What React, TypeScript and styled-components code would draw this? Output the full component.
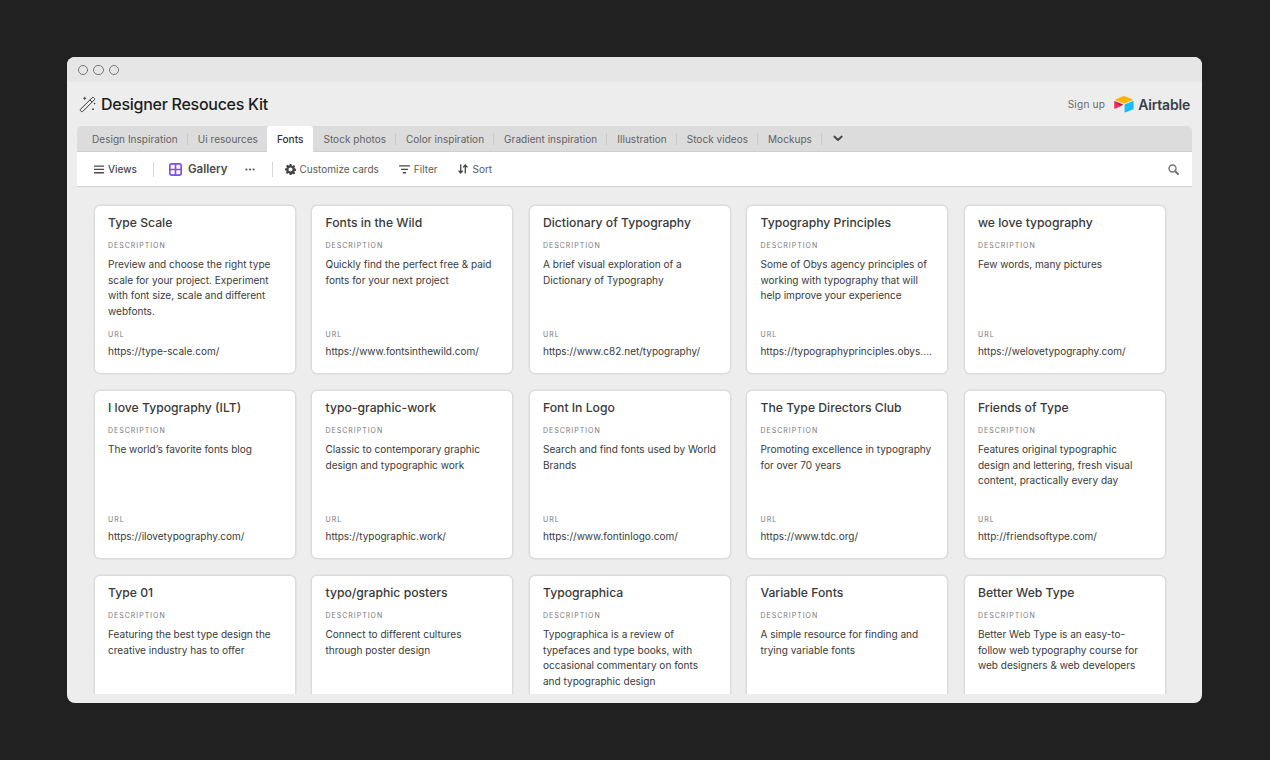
import React from "react";
import styled, { createGlobalStyle } from "styled-components";

const Global = createGlobalStyle`
  html, body { margin: 0; padding: 0; background: #212121; height: 760px; overflow: hidden; }
  body { font-family: Inter, "Liberation Sans", sans-serif; -webkit-font-smoothing: antialiased; }
  * { box-sizing: border-box; }
`;

const Page = styled.div`
  height: 760px;
  padding: 57px 68px 57px 67px;
`;
const Window = styled.div`
  height: 646px;
  background: #ededed;
  border-radius: 8px;
  overflow: hidden;
  display: flex;
  flex-direction: column;
`;
const TitleBar = styled.div`
  height: 25px;
  flex: none;
  background: #e6e6e6;
  display: flex;
  align-items: center;
  gap: 5px;
  padding: 1px 0 0 10.5px;
`;
const Light = styled.span`
  width: 10.5px;
  height: 10.5px;
  border-radius: 50%;
  border: 1px solid #777;
`;
const Shell = styled.div`
  flex: 1;
  min-height: 0;
  padding: 0 10px 9px;
  display: flex;
  flex-direction: column;
`;
const Header = styled.header`
  height: 44px;
  flex: none;
  display: flex;
  align-items: center;
  padding: 0 2px;
`;
const Title = styled.h1`
  margin: 0 0 0 4px;
  font-size: 16px;
  font-weight: 500;
  letter-spacing: -0.27px;
  color: #1d1d1d;
`;
const HeaderRight = styled.div`
  margin-left: auto;
  display: flex;
  align-items: center;
`;
const SignUp = styled.span`
  font-size: 10.1px;
  color: #6a6a6a;
  letter-spacing: 0.2px;
  margin-right: 9px;
`;
const LogoBox = styled.span`
  display: flex;
  margin-left: -1px;
`;
const Wordmark = styled.span`
  font-size: 14px;
  font-weight: 600;
  letter-spacing: -0.2px;
  color: #3a3f47;
  margin-left: 3px;
`;
const Tabs = styled.nav`
  height: 26px;
  flex: none;
  background: #dcdcdc;
  border-bottom: 1px solid #cfcfcf;
  border-radius: 5px 5px 0 0;
  padding-left: 5px;
  display: flex;
`;
const Tab = styled.div<{ $active?: boolean; $hideSep?: boolean }>`
  position: relative;
  height: ${(p) => (p.$active ? "26px" : "25px")};
  padding: 0 10px;
  margin-left: ${(p) => (p.$active ? "-1px" : "0")};
  display: flex;
  align-items: center;
  font-size: 10px;
  letter-spacing: 0.04px;
  color: ${(p) => (p.$active ? "#333" : "#626262")};
  background: ${(p) => (p.$active ? "#fff" : "transparent")};
  border-radius: ${(p) => (p.$active ? "3px 3px 0 0" : "0")};
  font-weight: ${(p) => (p.$active ? 500 : 400)};
  &::after {
    content: "";
    display: ${(p) => (p.$hideSep || p.$active ? "none" : "block")};
    position: absolute;
    right: 0;
    top: 7px;
    height: 12px;
    width: 1px;
    background: #cacaca;
  }
`;
const ChevronWrap = styled.div`
  display: flex;
  align-items: center;
  padding-left: 11px;
  color: #444;
`;
const Toolbar = styled.div`
  height: 35px;
  flex: none;
  background: #fff;
  border-bottom: 1px solid #d2d2d2;
  display: flex;
  align-items: center;
  padding: 0 13px 0 17px;
  color: #444;
`;
const ToolItem = styled.div<{ $gap?: number; $ml?: number; $strong?: boolean }>`
  display: flex;
  align-items: center;
  gap: ${(p) => p.$gap ?? 4}px;
  margin-left: ${(p) => p.$ml ?? 0}px;
  font-size: 10px;
  font-weight: ${(p) => (p.$strong ? 500 : 400)};
  color: ${(p) => (p.$strong ? "#4a4a4a" : "#5a5a5a")};
`;
const GalleryLabel = styled.span`
  font-size: 11.5px;
  font-weight: 600;
  color: #4a4a4a;
`;
const ToolSep = styled.span<{ $ml: number }>`
  width: 1px;
  height: 15px;
  background: #d8d8d8;
  margin-left: ${(p) => p.$ml}px;
`;
const SearchWrap = styled.div`
  margin-left: auto;
  display: flex;
  color: #777;
`;
const Scroll = styled.main`
  flex: 1;
  min-height: 0;
  overflow: hidden;
  padding: 18px 26px 0 17px;
`;
const Grid = styled.div`
  display: grid;
  grid-template-columns: repeat(5, 201.6px);
  grid-auto-rows: 169px;
  column-gap: 15.9px;
  row-gap: 16px;
`;
const Card = styled.article`
  background: #fff;
  border-radius: 5px;
  box-shadow: 0 0 0 1.5px #dcdcdc;
  margin: 1px;
  padding: 8px 13px 0;
  display: flex;
  flex-direction: column;
  min-width: 0;
  height: 167px;
`;
const CardTitle = styled.h2`
  margin: 0;
  height: 18px;
  line-height: 18px;
  font-size: 12.2px;
  font-weight: 500;
  color: #3a3a3a;
  white-space: nowrap;
`;
const Label = styled.div`
  margin-top: 9px;
  height: 9px;
  line-height: 9px;
  font-size: 7px;
  letter-spacing: 1px;
  color: #777;
  text-transform: uppercase;
`;
const Description = styled.p`
  margin: 7px 0 0;
  height: 62px;
  font-size: 10.05px;
  line-height: 15.5px;
  color: #3a3a3a;
`;
const UrlLabel = styled(Label)`
  margin-top: 11px;
`;
const Url = styled.div`
  margin-top: 5px;
  line-height: 15px;
  font-size: 10px;
  color: #3a3a3a;
  white-space: nowrap;
  overflow: hidden;
  text-overflow: ellipsis;
`;

const tabs = ["Design Inspiration", "Ui resources", "Fonts", "Stock photos", "Color inspiration", "Gradient inspiration", "Illustration", "Stock videos", "Mockups"];

const cards = [
  ["Type Scale", "Preview and choose the right type scale for your project. Experiment with font size, scale and different webfonts.", "https://type-scale.com/"],
  ["Fonts in the Wild", "Quickly find the perfect free & paid fonts for your next project", "https://www.fontsinthewild.com/"],
  ["Dictionary of Typography", "A brief visual exploration of a Dictionary of Typography", "https://www.c82.net/typography/"],
  ["Typography Principles", "Some of Obys agency principles of working with typography that will help improve your experience", "https://typographyprinciples.obys.agency/"],
  ["we love typography", "Few words, many pictures", "https://welovetypography.com/"],
  ["I love Typography (ILT)", "The world’s favorite fonts blog", "https://ilovetypography.com/"],
  ["typo-graphic-work", "Classic to contemporary graphic design and typographic work", "https://typographic.work/"],
  ["Font In Logo", "Search and find fonts used by World Brands", "https://www.fontinlogo.com/"],
  ["The Type Directors Club", "Promoting excellence in typography for over 70 years", "https://www.tdc.org/"],
  ["Friends of Type", "Features original typographic design and lettering, fresh visual content, practically every day", "http://friendsoftype.com/"],
  ["Type 01", "Featuring the best type design the creative industry has to offer", "https://type-01.com/"],
  ["typo/graphic posters", "Connect to different cultures through poster design", "https://www.typographicposters.com/"],
  ["Typographica", "Typographica is a review of typefaces and type books, with occasional commentary on fonts and typographic design", "https://typographica.org/"],
  ["Variable Fonts", "A simple resource for finding and trying variable fonts", "https://v-fonts.com/"],
  ["Better Web Type", "Better Web Type is an easy-to-follow web typography course for web designers & web developers", "https://betterwebtype.com/"],
];

const WandIcon = () => (
  <svg width="18" height="18" viewBox="0 0 18 18" fill="none" stroke="#3a3a3a">
    <path d="M1.5 14.3 13.2 2.6a1 1 0 0 1 1.4 0l.8.8a1 1 0 0 1 0 1.4L3.7 16.5a1 1 0 0 1-1.4 0l-.8-.8a1 1 0 0 1 0-1.4Z" strokeWidth="1" />
    <path d="m10.9 4.9 2.2 2.2" strokeWidth="1" />
    <path d="M5.7 1.8v3M4.2 3.3h3" strokeWidth=".9" />
    <circle cx="15.6" cy="8.6" r=".8" fill="#3a3a3a" stroke="none" />
    <circle cx="14" cy="14.2" r=".9" fill="#3a3a3a" stroke="none" />
  </svg>
);

const AirtableLogo = () => (
  <svg width="22" height="18.7" viewBox="0 0 200 170">
    <path fill="#FCB400" d="M90.04 12.37 24.08 39.66c-3.67 1.52-3.63 6.73.06 8.19l66.24 26.27c5.82 2.31 12.3 2.31 18.12 0l66.23-26.27c3.69-1.46 3.73-6.67.06-8.19l-65.96-27.29c-6.02-2.49-12.78-2.49-18.79 0" />
    <path fill="#18BFFF" d="M105.31 88.46v65.62c0 3.12 3.15 5.26 6.05 4.11l73.81-28.65c1.68-.67 2.79-2.3 2.79-4.11V59.81c0-3.12-3.15-5.26-6.05-4.11l-73.81 28.65c-1.68.67-2.79 2.3-2.79 4.11" />
    <path fill="#F82B60" d="M88.08 91.85 66.17 102.42l-2.22 1.08-46.24 22.15c-2.93 1.41-6.67-.72-6.67-3.98V60.09c0-1.18.6-2.2 1.41-2.96.34-.34.72-.62 1.12-.84 1.11-.66 2.68-.84 4.02-.31l70.12 27.78c3.56 1.41 3.84 6.41.37 8.09" />
    <path fill="rgba(0,0,0,0.25)" d="M88.08 91.85 66.17 102.42 12.45 57.13c.34-.34.72-.62 1.12-.84 1.11-.66 2.68-.84 4.02-.31l70.12 27.78c3.56 1.41 3.84 6.41.37 8.09" />
  </svg>
);

const Chevron = () => (
  <svg width="10" height="7" viewBox="0 0 10 7" fill="none">
    <path d="M1.3 1.5 5 5l3.7-3.5" stroke="currentColor" strokeWidth="1.8" strokeLinecap="round" strokeLinejoin="round" />
  </svg>
);
const MenuIcon = () => (
  <svg width="10" height="9" viewBox="0 0 10 9" fill="currentColor">
    <rect y="0.5" width="10" height="1.3" rx=".3" />
    <rect y="3.8" width="10" height="1.3" rx=".3" />
    <rect y="7.1" width="10" height="1.3" rx=".3" />
  </svg>
);
const GalleryIcon = () => (
  <svg width="13" height="13" viewBox="0 0 14 14" fill="none">
    <rect x=".9" y=".9" width="12.2" height="12.2" rx="2" stroke="#7c4dea" strokeWidth="1.8" />
    <path d="M7 1v12M1 7h12" stroke="#7c4dea" strokeWidth="1.8" />
  </svg>
);
const DotsIcon = () => (
  <svg width="10" height="3" viewBox="0 0 10 3" fill="#555">
    <circle cx="1.4" cy="1.5" r="1.1" />
    <circle cx="5" cy="1.5" r="1.1" />
    <circle cx="8.6" cy="1.5" r="1.1" />
  </svg>
);
const GearIcon = () => (
  <svg width="11" height="11" viewBox="0 0 24 24" fill="#444">
    <path fillRule="evenodd" d="M10 0h4l.7 3.3 2 .8 2.8-1.8 2.8 2.8-1.8 2.8.8 2 3.3.7v4l-3.3.7-.8 2 1.8 2.8-2.8 2.8-2.8-1.8-2 .8L14 24h-4l-.7-3.3-2-.8-2.8 1.8-2.8-2.8 1.8-2.8-.8-2L0 14v-4l3.3-.7.8-2-1.8-2.8 2.8-2.8 2.8 1.8 2-.8L10 0Zm2 7.5a4.5 4.5 0 1 0 0 9 4.5 4.5 0 0 0 0-9Z" />
  </svg>
);
const FilterIcon = () => (
  <svg width="11" height="9" viewBox="0 0 11 9" fill="#444">
    <rect x="0" y="0.3" width="11" height="1.3" rx=".4" />
    <rect x="2" y="3.7" width="7" height="1.3" rx=".4" />
    <rect x="3.8" y="7.1" width="3.4" height="1.3" rx=".4" />
  </svg>
);
const SortIcon = () => (
  <svg width="10" height="10" viewBox="0 0 10 10" fill="none" stroke="#444" strokeWidth="1.3">
    <path d="M2.7 0.5v8.5M.6 6.6 2.7 9l2.1-2.4" />
    <path d="M7.3 9.5V1M5.2 3.4 7.3 1l2.1 2.4" />
  </svg>
);
const SearchIcon = () => (
  <svg width="11" height="11" viewBox="0 0 11 11" fill="none" stroke="currentColor">
    <circle cx="4.5" cy="4.5" r="3.5" strokeWidth="1.4" />
    <path d="M7.2 7.2 10 10" strokeWidth="2" strokeLinecap="round" />
  </svg>
);

export default function App() {
  return (
    <>
      <Global />
      <Page>
        <Window>
          <TitleBar>
            <Light />
            <Light />
            <Light />
          </TitleBar>
          <Shell>
            <Header>
              <WandIcon />
              <Title>Designer Resouces Kit</Title>
              <HeaderRight>
                <SignUp>Sign up</SignUp>
                <LogoBox>
                  <AirtableLogo />
                </LogoBox>
                <Wordmark>Airtable</Wordmark>
              </HeaderRight>
            </Header>
            <Tabs>
              {tabs.map((t, i) => (
                <Tab key={t} $active={t === "Fonts"} $hideSep={i === 1}>
                  {t}
                </Tab>
              ))}
              <ChevronWrap>
                <Chevron />
              </ChevronWrap>
            </Tabs>
            <Toolbar>
              <ToolItem $strong>
                <MenuIcon />
                Views
              </ToolItem>
              <ToolSep $ml={16} />
              <ToolItem $gap={6} $ml={15}>
                <GalleryIcon />
                <GalleryLabel>Gallery</GalleryLabel>
              </ToolItem>
              <ToolItem $ml={17}>
                <DotsIcon />
              </ToolItem>
              <ToolSep $ml={17} />
              <ToolItem $gap={4} $ml={12}>
                <GearIcon />
                Customize cards
              </ToolItem>
              <ToolItem $ml={20}>
                <FilterIcon />
                Filter
              </ToolItem>
              <ToolItem $gap={5} $ml={20}>
                <SortIcon />
                Sort
              </ToolItem>
              <SearchWrap>
                <SearchIcon />
              </SearchWrap>
            </Toolbar>
            <Scroll>
              <Grid>
                {cards.map(([title, desc, url]) => (
                  <Card key={title}>
                    <CardTitle>{title}</CardTitle>
                    <Label>Description</Label>
                    <Description>{desc}</Description>
                    <UrlLabel>URL</UrlLabel>
                    <Url>{url}</Url>
                  </Card>
                ))}
              </Grid>
            </Scroll>
          </Shell>
        </Window>
      </Page>
    </>
  );
}
